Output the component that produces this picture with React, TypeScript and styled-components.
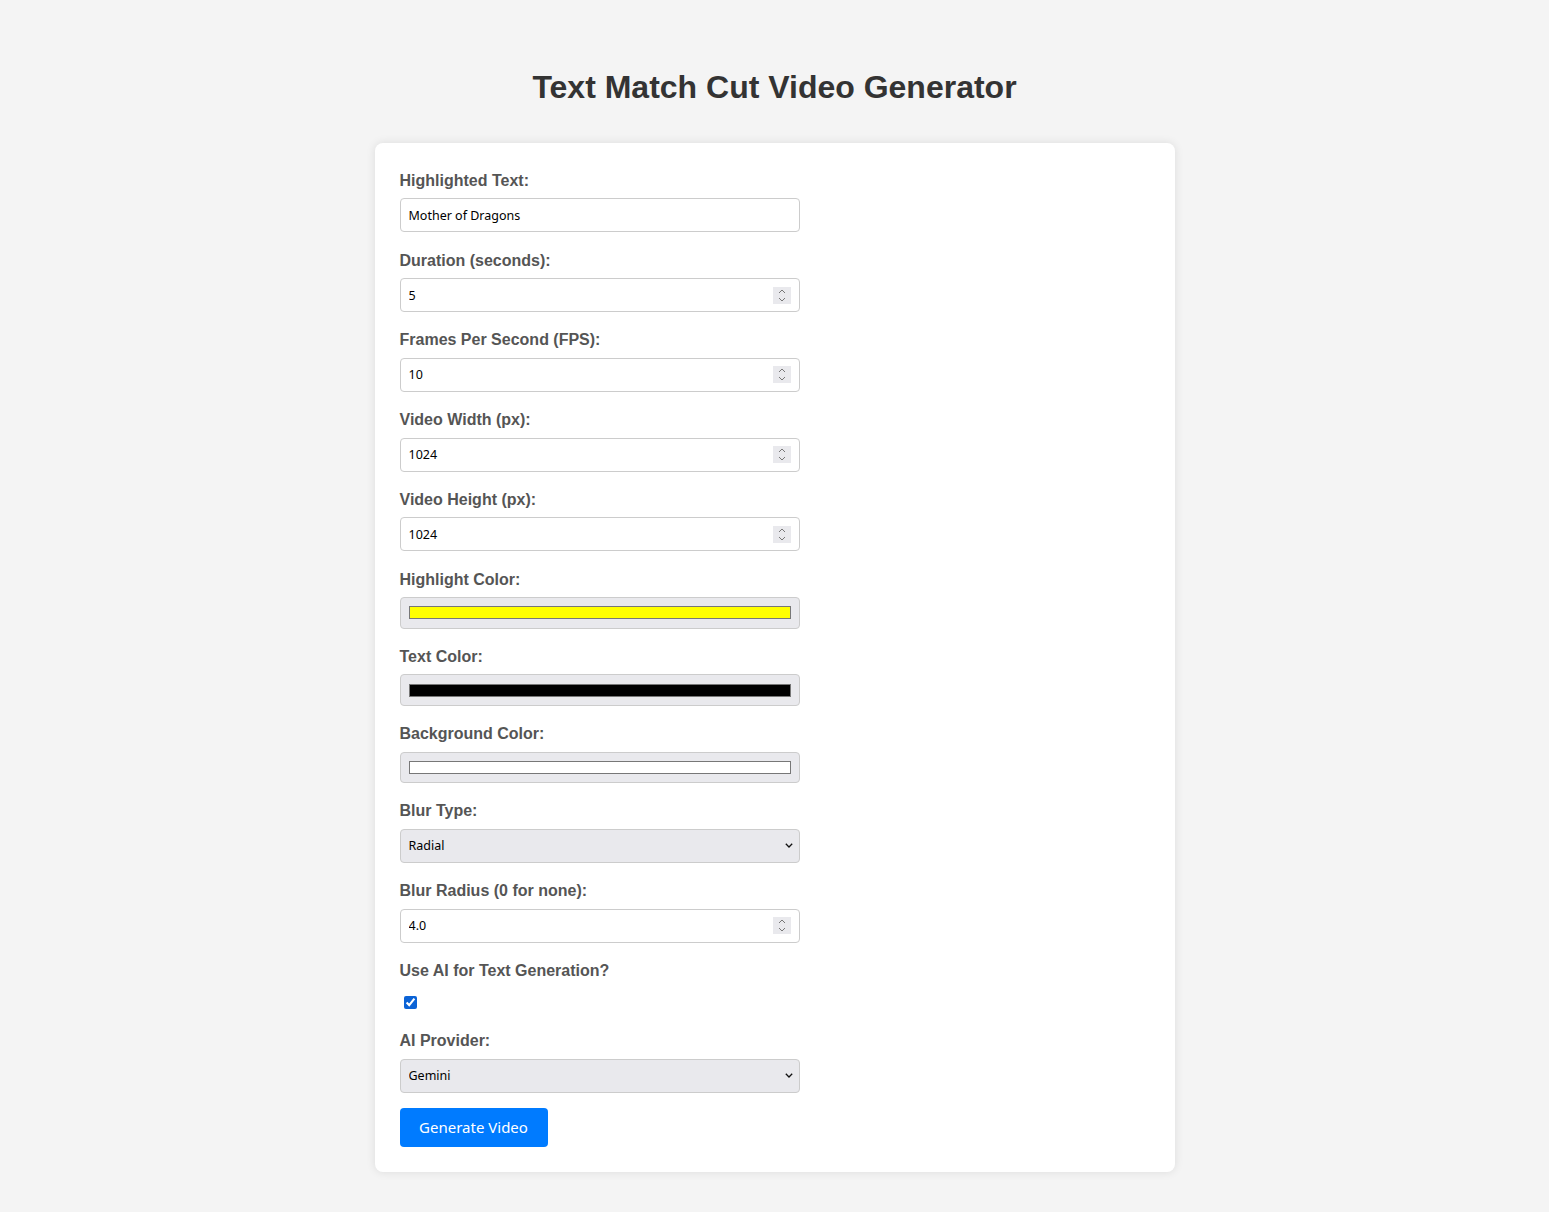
import React from "react";
import styled, { createGlobalStyle } from "styled-components";

const GlobalStyle = createGlobalStyle`
  html, body {
    margin: 0;
    padding: 0;
    background: #f4f4f4;
  }
  body {
    font-family: "Liberation Sans", Arial, sans-serif;
    color: #333;
  }
`;

const Page = styled.div`
  padding: 69px 0 40px;
`;

const Title = styled.h1`
  margin: 0 0 37.6px;
  font-size: 32px;
  line-height: 36.8px;
  font-weight: 700;
  text-align: center;
  color: #333;
`;

const Card = styled.div`
  width: 800px;
  box-sizing: border-box;
  margin: 0 auto;
  background: #fff;
  padding: 28.6px 25px 25px;
  border-radius: 8px;
  box-shadow: 0 0 10px rgba(0, 0, 0, 0.1);
`;

const Form = styled.form`
  display: flex;
  flex-direction: column;
  align-items: flex-start;
`;

const Field = styled.div<{ $last?: boolean }>`
  display: flex;
  flex-direction: column;
  align-items: flex-start;
  margin-bottom: ${(p) => (p.$last ? "15px" : "19.3px")};
`;

const Label = styled.label`
  display: block;
  font-size: 16px;
  line-height: 18.4px;
  font-weight: 700;
  color: #555;
  margin-bottom: 8px;
`;

const controlFont = `
  font-family: "Noto Sans", "Open Sans", sans-serif;
  font-size: 12.5px;
  color: #000;
`;

const TextInput = styled.input`
  width: 400px;
  height: 34px;
  box-sizing: border-box;
  padding: 0 8px;
  border: 1px solid #ccc;
  border-radius: 4px;
  background: #fff;
  outline: none;
  ${controlFont}
`;

const NumberBox = styled.div`
  width: 400px;
  height: 34px;
  box-sizing: border-box;
  display: flex;
  align-items: center;
  padding: 0 8px;
  border: 1px solid #ccc;
  border-radius: 4px;
  background: #fff;
`;

const BareInput = styled.input`
  flex: 1;
  min-width: 0;
  height: 100%;
  padding: 0;
  border: none;
  outline: none;
  background: transparent;
  ${controlFont}
`;

const Spinner = styled.span`
  display: flex;
  width: 18px;
  height: 17px;
  background: #e9e9ed;
  flex: none;
`;

const ColorInput = styled.input`
  width: 400px;
  height: 31.6px;
  box-sizing: border-box;
  padding: 8.3px 8px;
  border: 1px solid #ccc;
  border-radius: 4px;
  background: #e9e9ed;
  cursor: pointer;
  &::-webkit-color-swatch-wrapper {
    padding: 0;
  }
  &::-webkit-color-swatch {
    border: 1px solid #777;
    border-radius: 0;
  }
`;

const SelectBox = styled.div`
  width: 400px;
  height: 34px;
  box-sizing: border-box;
  display: flex;
  align-items: center;
  padding: 0 6px 0 8px;
  border: 1px solid #ccc;
  border-radius: 4px;
  background: #e9e9ed;
`;

const Select = styled.select`
  flex: 1;
  height: 100%;
  padding: 0;
  border: none;
  outline: none;
  background: transparent;
  appearance: none;
  -webkit-appearance: none;
  ${controlFont}
`;

const CheckRow = styled.div`
  height: 24.6px;
  box-sizing: border-box;
  padding-top: 8px;
  display: flex;
  align-items: flex-start;
`;

const Checkbox = styled.input`
  width: 13px;
  height: 13px;
  margin: 0 0 0 4px;
  accent-color: #0b63d6;
`;

const Button = styled.button`
  width: 148px;
  height: 39px;
  padding: 0;
  border: none;
  border-radius: 4px;
  background: #007bff;
  color: #fff;
  font-family: "Noto Sans", "Open Sans", sans-serif;
  font-size: 15px;
  cursor: pointer;
`;

const SpinIcon = () => (
  <Spinner>
    <svg width="18" height="17" viewBox="0 0 18 17">
      <polyline points="6,6 9,3 12,6" fill="none" stroke="#777" strokeWidth="1" />
      <polyline points="6,11 9,14 12,11" fill="none" stroke="#777" strokeWidth="1" />
    </svg>
  </Spinner>
);

const Chevron = () => (
  <svg width="8" height="5" viewBox="0 0 8 5">
    <polyline points="0.8,0.8 4,4 7.2,0.8" fill="none" stroke="#111" strokeWidth="1.3" />
  </svg>
);

const NumberField = ({ id, label, value }: { id: string; label: string; value: string }) => (
  <Field>
    <Label htmlFor={id}>{label}</Label>
    <NumberBox>
      <BareInput id={id} type="text" inputMode="decimal" defaultValue={value} />
      <SpinIcon />
    </NumberBox>
  </Field>
);

const ColorField = ({ id, label, value }: { id: string; label: string; value: string }) => (
  <Field>
    <Label htmlFor={id}>{label}</Label>
    <ColorInput id={id} type="color" defaultValue={value} />
  </Field>
);

const SelectField = ({
  id,
  label,
  options,
  last,
}: {
  id: string;
  label: string;
  options: string[];
  last?: boolean;
}) => (
  <Field $last={last}>
    <Label htmlFor={id}>{label}</Label>
    <SelectBox>
      <Select id={id} defaultValue={options[0]}>
        {options.map((o) => (
          <option key={o} value={o}>
            {o}
          </option>
        ))}
      </Select>
      <Chevron />
    </SelectBox>
  </Field>
);

export default function App() {
  return (
    <>
      <GlobalStyle />
      <Page>
        <Title>Text Match Cut Video Generator</Title>
        <Card>
          <Form onSubmit={(e) => e.preventDefault()}>
            <Field>
              <Label htmlFor="text">Highlighted Text:</Label>
              <TextInput id="text" type="text" defaultValue="Mother of Dragons" />
            </Field>
            <NumberField id="duration" label="Duration (seconds):" value="5" />
            <NumberField id="fps" label="Frames Per Second (FPS):" value="10" />
            <NumberField id="width" label="Video Width (px):" value="1024" />
            <NumberField id="height" label="Video Height (px):" value="1024" />
            <ColorField id="hl" label="Highlight Color:" value="#ffff00" />
            <ColorField id="tc" label="Text Color:" value="#000000" />
            <ColorField id="bg" label="Background Color:" value="#ffffff" />
            <SelectField id="blur" label="Blur Type:" options={["Radial", "Gaussian", "None"]} />
            <NumberField id="radius" label="Blur Radius (0 for none):" value="4.0" />
            <Field>
              <Label htmlFor="ai">Use AI for Text Generation?</Label>
              <CheckRow>
                <Checkbox id="ai" type="checkbox" defaultChecked />
              </CheckRow>
            </Field>
            <SelectField id="provider" label="AI Provider:" options={["Gemini", "OpenAI"]} last />
            <Button type="submit">Generate Video</Button>
          </Form>
        </Card>
      </Page>
    </>
  );
}
